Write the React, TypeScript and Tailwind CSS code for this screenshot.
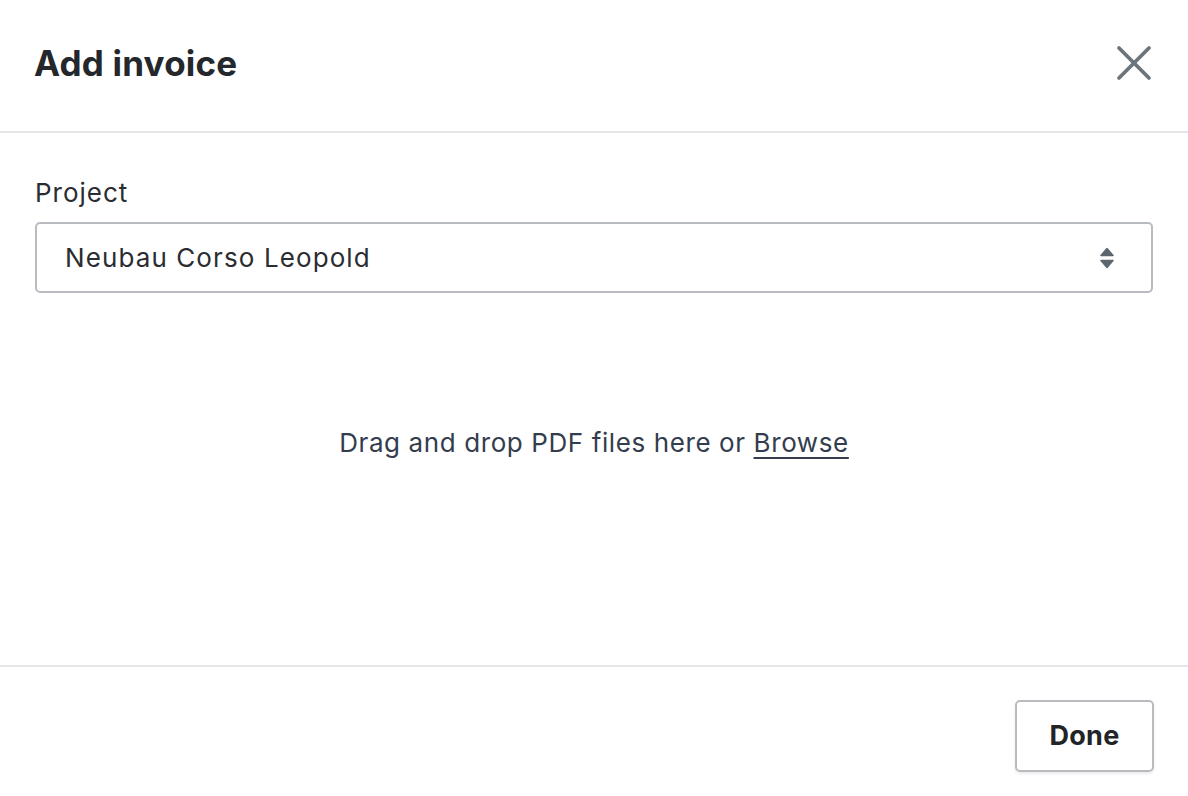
import { X } from 'lucide-react';

export default function App() {
    return (
        <div className="w-[1188px] h-[796px] bg-white flex flex-col text-[#24272b]" style={{ fontFamily: 'Inter, "Noto Sans", sans-serif' }}>
            {/* header */}
            <div className="h-[133px] shrink-0 flex items-center justify-between pl-[34px] pr-[24px] border-b-2 border-[#e6e6ea]">
                <h1 className="text-[35px] font-bold tracking-[0.2px] leading-none -mt-[4px]">Add invoice</h1>
                <button className="w-[60px] h-[60px] flex items-center justify-center text-[#6c757b] -mt-[6px]">
                    <X size={66} strokeWidth={1.5} />
                </button>
            </div>

            {/* body */}
            <div className="flex-1 flex flex-col px-[35px] pt-[44px]">
                <label className="text-[26px] leading-[32px] text-[#2a2d31] tracking-[1px]">Project</label>
                <div className="mt-[13px] h-[71px] border-2 border-[#b8bcc0] rounded-[5px] flex items-center justify-between pl-[28px] pr-[37px]">
                    <span className="text-[26px] text-[#2a2d31] tracking-[1.1px]">Neubau Corso Leopold</span>
                    <svg width="14" height="22" viewBox="0 0 14 22" className="text-[#5d666d]">
                        <path d="M7 1.5 L13 8.5 L1 8.5 Z" fill="currentColor" strokeLinejoin="round" stroke="currentColor" strokeWidth="1.5" />
                        <path d="M7 20.5 L13 13.5 L1 13.5 Z" fill="currentColor" strokeLinejoin="round" stroke="currentColor" strokeWidth="1.5" />
                    </svg>
                </div>
                <div className="flex-1 flex items-start justify-center pt-[130px]">
                    <p className="text-[26px] text-[#333d4d] tracking-[0.6px]">
                        Drag and drop PDF files here or <span className="underline underline-offset-[5px] decoration-[2px]">Browse</span>
                    </p>
                </div>
            </div>

            {/* footer */}
            <div className="h-[131px] shrink-0 border-t-2 border-[#e6e6ea] flex justify-end items-start pt-[33px] pr-[34px]">
                <button className="w-[139px] h-[72px] border-2 border-[#b8bcc0] rounded-[5px] shadow-[0_2px_3px_rgba(0,0,0,0.08)] text-[27px] font-bold text-[#222528] tracking-[0.3px]">
                    Done
                </button>
            </div>
        </div>
    );
}
